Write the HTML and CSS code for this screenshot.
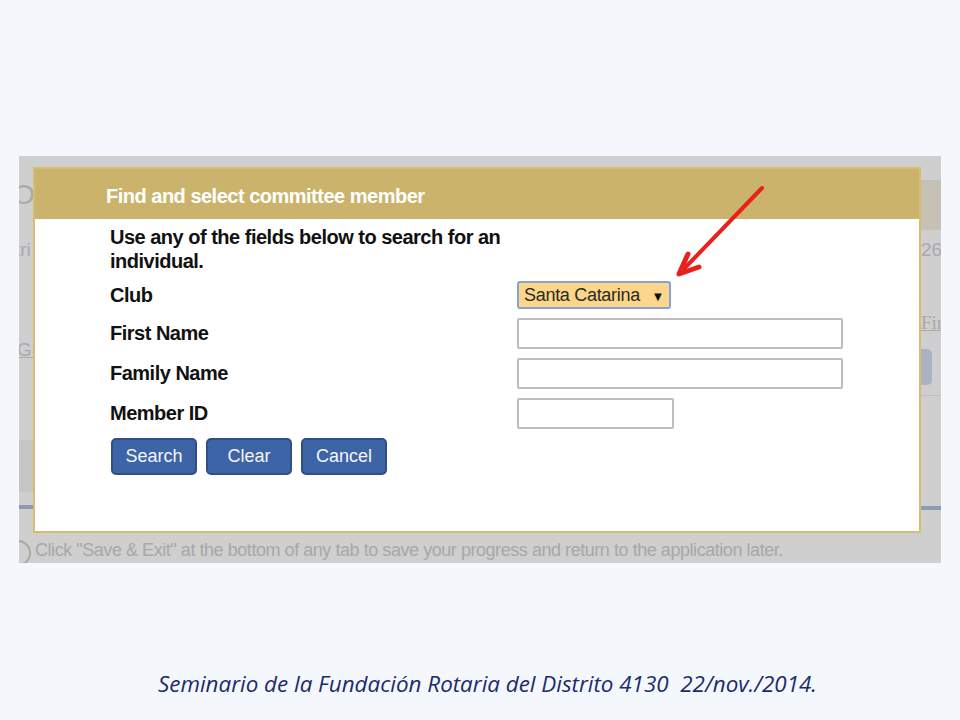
FILE: index.html
```html
<!DOCTYPE html>
<html lang="es">
<head>
    <meta charset="UTF-8">
    <meta name="viewport" content="width=device-width, initial-scale=1.0">
    <title>Seminario de la Fundación Rotaria</title>
    <link rel="stylesheet" href="styles.css">
</head>
<body>
    <div class="slide">
        <div class="shot">
            <!-- page under the dialog, only its edges show -->
            <div class="backdrop">
                <div class="edge left-edge">
                    <div class="ghost big">O</div>
                    <div class="ghost tri">tri</div>
                    <div class="ghost link gr">Gr</div>
                    <div class="band"></div>
                    <div class="blue-line"></div>
                </div>
                <div class="edge right-edge">
                    <div class="head-band"></div>
                    <div class="ghost num">26</div>
                    <div class="ghost link firs">Firs</div>
                    <div class="ghost-btn"></div>
                    <div class="thin-line"></div>
                    <div class="blue-line"></div>
                </div>
            </div>
            <div class="note">
                <span class="note-circle"></span>
                Click "Save &amp; Exit" at the bottom of any tab to save your progress and return to the application later.
            </div>

            <div class="dialog">
                <div class="dialog-title">Find and select committee member</div>
                <div class="dialog-body">
                    <div class="intro">Use any of the fields below to search for an individual.</div>
                    <div class="form">
                        <label class="lbl">Club</label>
                        <div class="field">
                            <div class="select">Santa Catarina <span class="caret">▼</span></div>
                        </div>
                        <label class="lbl">First Name</label>
                        <div class="field"><div class="input wide"></div></div>
                        <label class="lbl">Family Name</label>
                        <div class="field"><div class="input wide"></div></div>
                        <label class="lbl">Member ID</label>
                        <div class="field"><div class="input short"></div></div>
                    </div>
                    <div class="buttons">
                        <button class="btn">Search</button>
                        <button class="btn">Clear</button>
                        <button class="btn">Cancel</button>
                    </div>
                </div>
            </div>

            <svg class="arrow" width="100" height="110" viewBox="0 0 100 110">
                <line x1="93" y1="8" x2="11" y2="93" stroke="#e8211c" stroke-width="4" stroke-linecap="round"/>
                <polyline points="19,74 10,94 30,87" fill="none" stroke="#e8211c" stroke-width="5" stroke-linecap="round" stroke-linejoin="round"/>
            </svg>
        </div>

        <div class="caption">Seminario de la Fundación Rotaria del Distrito 4130&nbsp;&nbsp;22/nov./2014.</div>
    </div>
</body>
</html>
```

FILE: styles.css
```css
body {
    margin: 0;
    background-color: #f4f8fc;
    font-family: 'Liberation Sans', Arial, sans-serif;
}

.slide {
    width: 960px;
    height: 720px;
    display: flex;
    flex-direction: column;
    align-items: flex-start;
}

.shot {
    position: relative;
    margin: 156px 0 0 19px;
    width: 922px;
    height: 407px;
    background-color: #cfcfd0;
    display: flex;
    flex-direction: column;
    overflow: hidden;
}

.backdrop {
    height: 382px;
    display: flex;
    justify-content: space-between;
}

.edge {
    display: flex;
    flex-direction: column;
    overflow: hidden;
}

.left-edge {
    width: 14px;
}

.right-edge {
    width: 20px;
}

.ghost {
    color: #a9a9aa;
    font-size: 19px;
    white-space: nowrap;
    line-height: 20px;
}

.ghost.link {
    text-decoration: underline;
}

.left-edge .big {
    font-size: 28px;
    line-height: 30px;
    margin-top: 24px;
    margin-left: -6px;
}

.left-edge .tri {
    margin-top: 30px;
    margin-left: -4px;
}

.left-edge .gr {
    margin-top: 80px;
    margin-left: -2px;
}

.band {
    margin-top: 80px;
    height: 52px;
    background-color: #c7c6c4;
}

.blue-line {
    margin-top: 13px;
    height: 4px;
    background-color: #8d9ab3;
}

.head-band {
    margin-top: 24px;
    height: 50px;
    background-color: #c6c1b4;
}

.right-edge .num {
    margin-top: 10px;
}

.right-edge .firs {
    margin-top: 53px;
    font-family: 'Liberation Serif', serif;
}

.ghost-btn {
    margin-top: 16px;
    width: 11px;
    height: 36px;
    background-color: #aab1c3;
    border-radius: 0 5px 5px 0;
}

.thin-line {
    margin-top: 10px;
    height: 1px;
    background-color: #bdbdbe;
}

.right-edge .blue-line {
    margin-top: 110px;
}

.note {
    display: flex;
    align-items: center;
    gap: 4px;
    color: #a7a7a8;
    font-size: 18px;
    white-space: nowrap;
    letter-spacing: -0.45px;
    height: 25px;
}

.note-circle {
    flex: none;
    width: 22px;
    height: 22px;
    border: 2px solid #a9a9aa;
    border-radius: 50%;
    margin-left: -14px;
    margin-top: 4px;
}

/* dialog sits over the page */
.dialog {
    position: absolute;
    left: 14px;
    top: 11px;
    width: 884px;
    height: 362px;
    border: 2px solid #d6bd70;
    background-color: #fff;
    display: flex;
    flex-direction: column;
}

.dialog-title {
    background-color: #ccb36b;
    color: #fff;
    font-weight: bold;
    font-size: 20px;
    height: 50px;
    line-height: 54px;
    padding-left: 71px;
    letter-spacing: -0.5px;
}

.dialog-body {
    padding: 6px 0 0 75px;
    color: #111;
}

.intro {
    font-weight: bold;
    font-size: 20px;
    line-height: 24px;
    width: 400px;
    letter-spacing: -0.5px;
}

.form {
    display: grid;
    grid-template-columns: 407px auto;
    row-gap: 9px;
    margin-top: 8px;
    align-items: center;
}

.lbl {
    font-weight: bold;
    font-size: 20px;
    letter-spacing: -0.5px;
}

.field {
    display: flex;
}

.select {
    height: 24px;
    width: 145px;
    border: 2px solid #86a3d8;
    border-radius: 3px;
    background-color: #fcd68a;
    color: #2a2a22;
    font-size: 18px;
    line-height: 24px;
    padding-left: 5px;
    letter-spacing: -0.3px;
}

.caret {
    font-size: 13px;
    margin-left: 7px;
    color: #111;
}

.input {
    height: 27px;
    border: 2px solid #bdbdbd;
    border-radius: 2px;
    background-color: #fff;
}

.input.wide {
    width: 322px;
}

.input.short {
    width: 153px;
}

.buttons {
    display: flex;
    gap: 9px;
    margin-top: 9px;
    margin-left: 1px;
}

.btn {
    height: 37px;
    width: 86px;
    background-color: #3d64a6;
    border: 2px solid #2f4f86;
    border-radius: 5px;
    color: #f4f6fb;
    font-family: 'Liberation Sans', Arial, sans-serif;
    font-size: 18px;
    padding: 0;
}

.arrow {
    position: absolute;
    left: 650px;
    top: 24px;
}

.caption {
    margin: 105px 0 0 158px;
    color: #1c2b6c;
    font-family: 'Open Sans', 'Noto Sans', sans-serif;
    font-style: italic;
    font-size: 22.4px;
    white-space: pre;
}
```
